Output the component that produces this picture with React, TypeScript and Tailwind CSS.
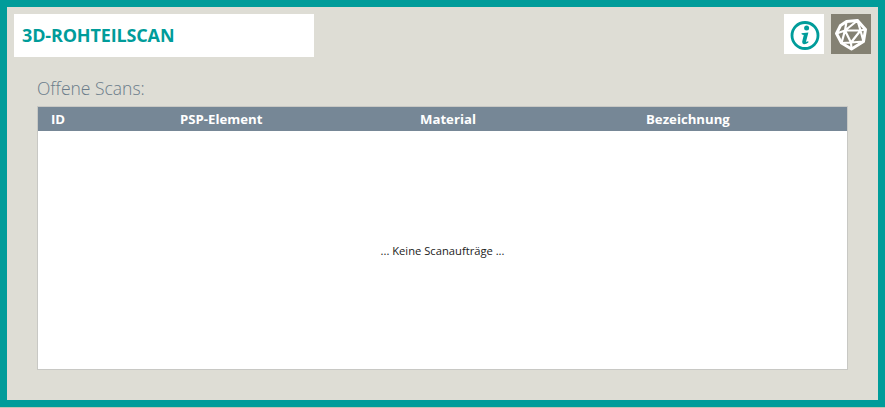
const App = () => {
  return (
    <div
      className="w-[885px] h-[408px] bg-[#c4c2b4] overflow-hidden"
      style={{ fontFamily: '"Open Sans", "Noto Sans", sans-serif' }}
    >
      <div className="h-[407px] border-[7px] border-[#009c9a] bg-[#deddd5] p-[7px] flex flex-col">
        <div className="flex items-start justify-between">
          <div className="w-[300px] h-[43px] bg-white flex items-center pl-[8px]">
            <h1 className="text-[18px] font-bold tracking-[-0.15px] text-[#009c9a]">3D-ROHTEILSCAN</h1>
          </div>
          <div className="flex gap-[7px]">
            <div className="w-[40px] h-[40px] bg-white">
              <svg width="40" height="40" viewBox="0 0 40 40" fill="none">
                <circle cx="21" cy="21.5" r="13" stroke="#009c9a" strokeWidth="2.8" />
                <circle cx="22.6" cy="14" r="2.5" fill="#009c9a" />
                <path d="M17.4 19.2 L24.4 18.4 L22.2 27 Q22 28.2 23 27.8 L24.2 27 L24.4 28.4 Q22 30.4 19.8 30.2 Q17.8 30 18.2 27.6 L19.8 21 L17.9 20.6 Z" fill="#009c9a" />
              </svg>
            </div>
            <div className="w-[40px] h-[40px] bg-[#848173]">
              <svg width="40" height="40" viewBox="0 0 40 40" fill="none" stroke="white" strokeLinejoin="round">
                <path strokeWidth="3" d="M15.5 7.5 L26.5 6.5 L34.5 15.5 L32.5 27.5 L20.5 35 L10.5 29 L5.5 19.5 L9.5 11.5 Z" />
                <path strokeWidth="2.2" d="M14 16.5 L29.5 16.5 L20 28.5 Z M15.5 7.5 L14 16.5 L5.5 19.5 M14 16.5 L10.5 29 L20 28.5 L20.5 35 M20 28.5 L32.5 27.5 L29.5 16.5 L26.5 6.5 L14 16.5 M29.5 16.5 L34.5 15.5" />
              </svg>
            </div>
          </div>
        </div>
        <h2 className="mt-[20px] ml-[23px] text-[17.5px] leading-[22px] font-light text-[#6b7c8a]">Offene Scans:</h2>
        <div className="mt-[7px] ml-[23px] w-[811px] h-[264px] border border-[#c8c8c4] bg-white flex flex-col">
          <div className="h-[24px] bg-[#768796] shrink-0 pt-[1px] grid grid-cols-[142px_240px_226px_1fr] items-center text-[13.2px] font-bold text-white">
            <span className="pl-[13px]">ID</span>
            <span>PSP-Element</span>
            <span>Material</span>
            <span>Bezeichnung</span>
          </div>
          <div className="flex-1 pt-[2px] flex items-center justify-center text-[11.2px] text-[#222222]">
            ... Keine Scanaufträge ...
          </div>
        </div>
      </div>
    </div>
  );
};

export default App;
